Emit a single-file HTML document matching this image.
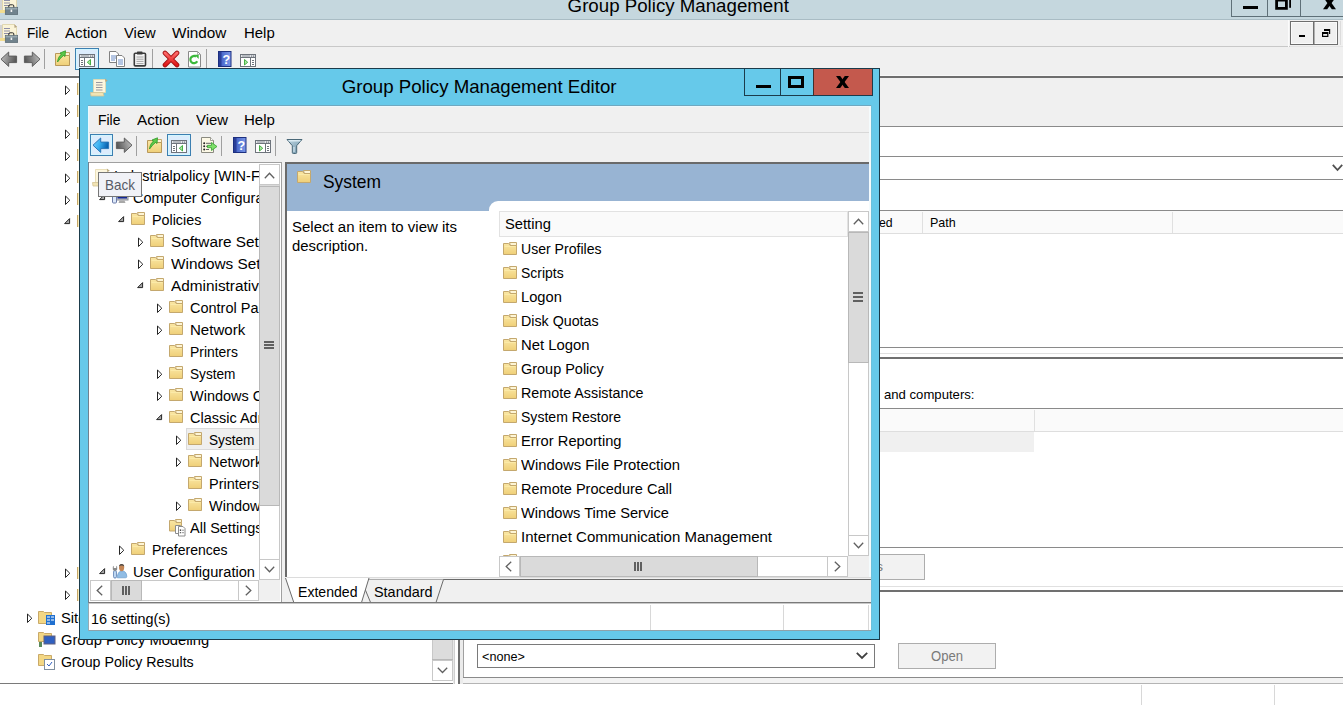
<!DOCTYPE html><html><head><meta charset="utf-8"><style>
html,body{margin:0;padding:0;}
body{width:1343px;height:705px;position:relative;overflow:hidden;background:#fff;font-family:"Liberation Sans", sans-serif;}
.t{position:absolute;white-space:nowrap;line-height:1;}
svg{display:block;}
</style></head><body>
<svg width="0" height="0" style="position:absolute"><defs><linearGradient id="fg" x1="0" y1="0" x2="0" y2="1"><stop offset="0" stop-color="#fae7a4"/><stop offset="1" stop-color="#efcf78"/></linearGradient><linearGradient id="rx" x1="0" y1="0" x2="0" y2="1"><stop offset="0" stop-color="#ff6a6a"/><stop offset="1" stop-color="#e01818"/></linearGradient><linearGradient id="scr" x1="0" y1="0" x2="0" y2="1"><stop offset="0" stop-color="#5a78d8"/><stop offset="1" stop-color="#081a8a"/></linearGradient><linearGradient id="hb" x1="0" y1="0" x2="1" y2="0"><stop offset="0" stop-color="#3a58c0"/><stop offset="1" stop-color="#7a98e8"/></linearGradient><linearGradient id="fl" x1="0" y1="0" x2="1" y2="1"><stop offset="0" stop-color="#c0d8e4"/><stop offset="1" stop-color="#6a8fa4"/></linearGradient><linearGradient id="abl" x1="0" y1="0" x2="1" y2="0.3"><stop offset="0" stop-color="#7ad6ff"/><stop offset="0.5" stop-color="#3ab0f0"/><stop offset="1" stop-color="#0a62b0"/></linearGradient><linearGradient id="agl" x1="0" y1="0" x2="1" y2="0.3"><stop offset="0" stop-color="#c8c8c8"/><stop offset="1" stop-color="#5a5a5a"/></linearGradient><linearGradient id="agr" x1="1" y1="0" x2="0" y2="0.3"><stop offset="0" stop-color="#c8c8c8"/><stop offset="1" stop-color="#5a5a5a"/></linearGradient></defs></svg>
<div style="position:absolute;left:0px;top:0px;width:1343px;height:19px;background:#c5d7de"></div>
<div style="position:absolute;left:0px;top:19px;width:1343px;height:1px;background:#a9bcc4"></div>
<div class="t" style="left:567.60px;top:-3.33px;font-size:18.7px;color:#000;">Group Policy Management</div>
<svg style="position:absolute;left:0px;top:-4px;" width="18" height="19" viewBox="0 0 18 19"><rect x="0" y="1" width="3" height="13" fill="#d4d4d4"/><path d="M2.5 0.5h12l2 2v12.5h-14z" fill="#fbf4d8" stroke="#dcd0a4" stroke-width="0.8"/><path d="M14.2 0.3l2.8 2.4-2.4 1.2z" fill="#b4a484"/><path d="M4 4.5h6M4 7h6M4 9.5h6" stroke="#8f8fa8" stroke-width="1.2"/><rect x="0" y="14" width="6" height="3" fill="#f2dd90"/><rect x="5.3" y="11.3" width="12.4" height="7.2" fill="#71838d" stroke="#55656e" stroke-width="0.7"/><rect x="5.7" y="11.7" width="11.6" height="1.8" fill="#98a8b0"/><path d="M8.8 11.3v-1.3q0-1.2 1.2-1.2h2.6q1.2 0 1.2 1.2v1.3" stroke="#2a2a2a" fill="none" stroke-width="1"/><rect x="10.6" y="13.6" width="1.6" height="2.4" fill="#f4f4f4"/></svg>
<div style="position:absolute;left:1231px;top:0px;width:112px;height:17px;box-sizing:border-box;border-left:1px solid #5f7078;border-bottom:1px solid #5f7078;"></div>
<div style="position:absolute;left:1267px;top:0px;width:1px;height:17px;background:#5f7078"></div>
<div style="position:absolute;left:1300px;top:0px;width:1px;height:17px;background:#5f7078"></div>
<div style="position:absolute;left:1243px;top:6px;width:15px;height:3px;background:#000"></div>
<svg style="position:absolute;left:1274px;top:0px;" width="18" height="11" viewBox="0 0 18 11"><path d="M1.2 -2H13.8V9.8H1.2zM4 1.5H11V7H4z" fill="#000" fill-rule="evenodd"/><rect x="15.2" y="0" width="1.8" height="7.8" fill="#000"/></svg>
<svg style="position:absolute;left:1322px;top:0px;" width="16" height="10" viewBox="0 0 16 10"><path d="M1 -3H5.2L14 9.2H9.8z" fill="#000"/><path d="M9.8 -3H14L5.2 9.2H1z" fill="#000"/></svg>
<div style="position:absolute;left:0px;top:20px;width:1343px;height:26px;background:#f0f0f0"></div>
<div style="position:absolute;left:0px;top:46px;width:1290px;height:1px;background:#c8c8c8"></div>
<svg style="position:absolute;left:0px;top:24px;" width="18" height="19" viewBox="0 0 18 19"><rect x="0" y="1" width="3" height="13" fill="#d4d4d4"/><path d="M2.5 0.5h12l2 2v12.5h-14z" fill="#fbf4d8" stroke="#dcd0a4" stroke-width="0.8"/><path d="M14.2 0.3l2.8 2.4-2.4 1.2z" fill="#b4a484"/><path d="M4 4.5h6M4 7h6M4 9.5h6" stroke="#8f8fa8" stroke-width="1.2"/><rect x="0" y="14" width="6" height="3" fill="#f2dd90"/><rect x="5.3" y="11.3" width="12.4" height="7.2" fill="#71838d" stroke="#55656e" stroke-width="0.7"/><rect x="5.7" y="11.7" width="11.6" height="1.8" fill="#98a8b0"/><path d="M8.8 11.3v-1.3q0-1.2 1.2-1.2h2.6q1.2 0 1.2 1.2v1.3" stroke="#2a2a2a" fill="none" stroke-width="1"/><rect x="10.6" y="13.6" width="1.6" height="2.4" fill="#f4f4f4"/></svg>
<div class="t" style="left:26.60px;top:25.38px;font-size:15.5px;color:#000;transform:scaleX(0.8816);transform-origin:0 0;">File</div>
<div class="t" style="left:65.40px;top:25.38px;font-size:15.5px;color:#000;transform:scaleX(0.9793);transform-origin:0 0;">Action</div>
<div class="t" style="left:124.20px;top:25.38px;font-size:15.5px;color:#000;transform:scaleX(0.9542);transform-origin:0 0;">View</div>
<div class="t" style="left:172.40px;top:25.38px;font-size:15.5px;color:#000;transform:scaleX(0.9859);transform-origin:0 0;">Window</div>
<div class="t" style="left:243.60px;top:25.38px;font-size:15.5px;color:#000;transform:scaleX(0.9638);transform-origin:0 0;">Help</div>
<div style="position:absolute;left:1290px;top:21px;width:48px;height:24px;box-sizing:border-box;border:1px solid #6e6e6e;background:#f0f0f0;box-shadow:inset 0 0 0 1px #fafafa"></div>
<div style="position:absolute;left:1313px;top:22px;width:1px;height:22px;background:#6e6e6e"></div>
<div style="position:absolute;left:1314px;top:22px;width:1px;height:22px;background:#b0b0b0"></div>
<div style="position:absolute;left:1299px;top:35px;width:6px;height:2px;background:#000"></div>
<div style="position:absolute;left:1288px;top:20px;width:1px;height:27px;background:#fbfbfb"></div>
<div style="position:absolute;left:1340px;top:21px;width:1px;height:24px;background:#dcdcdc"></div>
<div style="position:absolute;left:1290px;top:46px;width:53px;height:1px;background:#e4e4e4"></div>
<svg style="position:absolute;left:1321px;top:28px;" width="10" height="10" viewBox="0 0 10 10"><rect x="3" y="1" width="6" height="2" fill="#000"/><rect x="8" y="1" width="1.2" height="5" fill="#000"/><rect x="1.6" y="4.6" width="5.2" height="3.8" fill="#f0f0f0" stroke="#000" stroke-width="1.2"/><rect x="1" y="4" width="6" height="2" fill="#000"/></svg>
<div style="position:absolute;left:0px;top:47px;width:1343px;height:29px;background:#f0f0f0"></div>
<div style="position:absolute;left:0px;top:75px;width:1343px;height:1px;background:#f8f8f8"></div>
<div style="position:absolute;left:0px;top:76px;width:1343px;height:2px;background:#6e6e6e"></div>
<svg style="position:absolute;left:0px;top:51px;" width="18" height="17" viewBox="0 0 18 17"><path d="M1 8.2L8.7 1V5.1H16.6V11.6H8.7V15.4z" fill="url(#agl)" stroke="#5e5e5e" stroke-linejoin="round"/></svg>
<svg style="position:absolute;left:23px;top:51px;" width="18" height="17" viewBox="0 0 18 17"><path d="M17 8.2L9.3 1V5.1H1.4V11.6H9.3V15.4z" fill="url(#agr)" stroke="#5e5e5e" stroke-linejoin="round"/></svg>
<div style="position:absolute;left:44px;top:49px;width:1px;height:20px;background:#a0a0a0"></div>
<svg style="position:absolute;left:55px;top:50px;" width="16" height="17" viewBox="0 0 16 17"><path d="M7.5 2.5H14.5V5.5H8.5z" fill="#fdf5d6" stroke="#c4a86e"/><path d="M0.5 3.5H5.5L7 5.5H14.5V15.5H0.5z" fill="url(#fg)" stroke="#b8985a"/><path d="M2.5 12C3 8 4.5 5.5 6.5 4.2L5 3L10.5 0.8L10 6.5L8.5 5.5C6.5 7 4.5 9.5 2.5 12z" fill="#5cc84a" stroke="#2f9a28" stroke-width="0.8" stroke-linejoin="round"/></svg>
<div style="position:absolute;left:75px;top:48px;width:24px;height:22px;box-sizing:border-box;border:1px solid #3c7fb1;background:#dcecfc;box-shadow:inset 0 0 0 1px #d2f6ff"></div>
<svg style="position:absolute;left:78px;top:53px;" width="18" height="15" viewBox="0 0 18 15"><rect x="1.5" y="1.5" width="15" height="12" fill="#fff" stroke="#6e747c"/><rect x="2" y="2" width="14" height="2.5" fill="#e4e6ea"/><path d="M2 4.5h14" stroke="#6e747c"/><path d="M3 3h8" stroke="#8a9098"/><rect x="12" y="2.5" width="1.2" height="1.2" fill="#6e747c"/><rect x="14" y="2.5" width="1.2" height="1.2" fill="#6e747c"/><path d="M6.5 5v8" stroke="#6e747c"/><path d="M3 7.5h2M3 9.5h2M3 11.5h2" stroke="#6e747c"/><path d="M12.5 6.5v5.5l-3.2-2.75z" fill="#a8e8a0" stroke="#38a838" stroke-width="0.9"/></svg>
<svg style="position:absolute;left:108px;top:50px;" width="18" height="18" viewBox="0 0 18 18"><path d="M1.5 1.5h6.5l2.5 2.5v8.5h-9z" fill="#fff" stroke="#808080"/><path d="M3 6h5M3 8h5M3 10h4" stroke="#5a80c0" stroke-width="0.9"/><path d="M8.5 5.5h5.5l2.5 2.5v8.5h-8z" fill="#fff" stroke="#808080"/><path d="M10 10h5M10 12h5M10 14h5" stroke="#5a80c0" stroke-width="0.9"/></svg>
<svg style="position:absolute;left:133px;top:51px;" width="14" height="16" viewBox="0 0 14 16"><rect x="1.3" y="2.3" width="11.2" height="12.6" rx="1" fill="#f4f4f4" stroke="#3c3c3c" stroke-width="1.6"/><rect x="4" y="0.5" width="5.5" height="3" rx="0.6" fill="#3c3c3c"/><path d="M3.5 6h7M3.5 8.2h7M3.5 10.4h7M3.5 12.6h7" stroke="#9a9a9a" stroke-width="0.9"/></svg>
<div style="position:absolute;left:152px;top:49px;width:1px;height:20px;background:#a0a0a0"></div>
<svg style="position:absolute;left:162px;top:50px;" width="18" height="18" viewBox="0 0 18 18"><path d="M3 3L15 15M15 3L3 15" stroke="#a01010" stroke-width="4.6" stroke-linecap="round"/><path d="M3 3L15 15M15 3L3 15" stroke="url(#rx)" stroke-width="3" stroke-linecap="round"/></svg>
<svg style="position:absolute;left:187px;top:50px;" width="15" height="18" viewBox="0 0 15 18"><path d="M1.5 1.5h9l3 3v12.5h-12z" fill="#fff" stroke="#8a8a8a"/><path d="M10.5 1.5v3h3" fill="none" stroke="#a0a0a0" stroke-width="0.8"/><path d="M10.2 11.2a3.6 3.6 0 1 1-1.2-4.6" fill="none" stroke="#3cb83c" stroke-width="2.2"/><path d="M7.5 4.8h4.2v4.2z" fill="#3cb83c"/></svg>
<div style="position:absolute;left:206px;top:49px;width:1px;height:20px;background:#a0a0a0"></div>
<svg style="position:absolute;left:218px;top:51px;" width="14" height="16" viewBox="0 0 14 16"><rect x="0.5" y="0.5" width="12.5" height="15" fill="url(#hb)" stroke="#1c2f80"/><rect x="1" y="1" width="2.5" height="14" fill="#2a3f98"/><text x="8.3" y="12.6" font-family="Liberation Sans" font-size="12.5" font-weight="bold" fill="#fff" text-anchor="middle">?</text></svg>
<svg style="position:absolute;left:239px;top:53px;" width="18" height="15" viewBox="0 0 18 15"><rect x="1.5" y="1.5" width="15" height="12" fill="#fff" stroke="#6e747c"/><rect x="2" y="2" width="14" height="2.5" fill="#e4e6ea"/><path d="M2 4.5h14" stroke="#6e747c"/><path d="M3 3h8" stroke="#8a9098"/><rect x="12" y="2.5" width="1.2" height="1.2" fill="#6e747c"/><rect x="14" y="2.5" width="1.2" height="1.2" fill="#6e747c"/><path d="M11.5 5v8" stroke="#6e747c"/><path d="M13 7.5h2M13 9.5h2M13 11.5h2" stroke="#6e747c"/><path d="M5.5 6.5v5.5l3.2-2.75z" fill="#a8e8a0" stroke="#38a838" stroke-width="0.9"/></svg>
<div style="position:absolute;left:432px;top:77px;width:21px;height:583px;background:#dcdcdc;box-sizing:border-box;border-left:1px solid #c8c8c8;border-right:1px solid #c8c8c8"></div>
<div style="position:absolute;left:432px;top:659px;width:21px;height:1px;background:#b8b8b8"></div>
<div style="position:absolute;left:432px;top:660px;width:21px;height:21px;box-sizing:border-box;border:1px solid #c8c8c8;background:#fff"></div>
<svg style="position:absolute;left:437px;top:667px;" width="11" height="7" viewBox="0 0 11 7"><path d="M0.8 0.8L5.5 5.5L10.2 0.8" fill="none" stroke="#606060" stroke-width="1.3"/></svg>
<div style="position:absolute;left:0px;top:683px;width:454px;height:1px;background:#7a7a7a"></div>
<div style="position:absolute;left:460px;top:678px;width:883px;height:5px;background:#f3f3f3"></div>
<div style="position:absolute;left:460px;top:683px;width:883px;height:1px;background:#b4b4b4"></div>
<div style="position:absolute;left:453px;top:78px;width:1px;height:606px;background:#e8e8e8"></div>
<div style="position:absolute;left:454px;top:78px;width:1px;height:606px;background:#d0d0d0"></div>
<div style="position:absolute;left:455px;top:78px;width:3px;height:606px;background:#fff"></div>
<div style="position:absolute;left:458px;top:78px;width:2px;height:606px;background:#6e6e6e"></div>
<div style="position:absolute;left:460px;top:78px;width:3px;height:606px;background:#ebebeb"></div>
<svg style="position:absolute;left:65px;top:85px;" width="7" height="10" viewBox="0 0 7 10"><path d="M0.5 1v8.5l4.3-4.25z" fill="none" stroke="#262626" stroke-width="1" stroke-linejoin="miter"/></svg>
<svg style="position:absolute;left:65px;top:107px;" width="7" height="10" viewBox="0 0 7 10"><path d="M0.5 1v8.5l4.3-4.25z" fill="none" stroke="#262626" stroke-width="1" stroke-linejoin="miter"/></svg>
<svg style="position:absolute;left:65px;top:129px;" width="7" height="10" viewBox="0 0 7 10"><path d="M0.5 1v8.5l4.3-4.25z" fill="none" stroke="#262626" stroke-width="1" stroke-linejoin="miter"/></svg>
<svg style="position:absolute;left:65px;top:151px;" width="7" height="10" viewBox="0 0 7 10"><path d="M0.5 1v8.5l4.3-4.25z" fill="none" stroke="#262626" stroke-width="1" stroke-linejoin="miter"/></svg>
<svg style="position:absolute;left:65px;top:173px;" width="7" height="10" viewBox="0 0 7 10"><path d="M0.5 1v8.5l4.3-4.25z" fill="none" stroke="#262626" stroke-width="1" stroke-linejoin="miter"/></svg>
<svg style="position:absolute;left:65px;top:195px;" width="7" height="10" viewBox="0 0 7 10"><path d="M0.5 1v8.5l4.3-4.25z" fill="none" stroke="#262626" stroke-width="1" stroke-linejoin="miter"/></svg>
<svg style="position:absolute;left:63.5px;top:217.5px;" width="7" height="7" viewBox="0 0 7 7"><path d="M5.6 0.6v5h-5z" fill="#a8a8a8" stroke="#262626" stroke-width="1" stroke-linejoin="miter"/></svg>
<div style="position:absolute;left:77px;top:83px;width:2px;height:12px;box-sizing:border-box;background:#f8eec0;border-left:1px solid #c9a968"></div>
<div style="position:absolute;left:77px;top:105px;width:2px;height:12px;box-sizing:border-box;background:#f8eec0;border-left:1px solid #c9a968"></div>
<div style="position:absolute;left:77px;top:127px;width:2px;height:12px;box-sizing:border-box;background:#f8eec0;border-left:1px solid #c9a968"></div>
<div style="position:absolute;left:77px;top:149px;width:2px;height:12px;box-sizing:border-box;background:#f8eec0;border-left:1px solid #c9a968"></div>
<div style="position:absolute;left:77px;top:171px;width:2px;height:12px;box-sizing:border-box;background:#f8eec0;border-left:1px solid #c9a968"></div>
<div style="position:absolute;left:77px;top:193px;width:2px;height:12px;box-sizing:border-box;background:#f8eec0;border-left:1px solid #c9a968"></div>
<div style="position:absolute;left:77px;top:215px;width:2px;height:12px;box-sizing:border-box;background:#f8eec0;border-left:1px solid #c9a968"></div>
<div style="position:absolute;left:77px;top:567px;width:2px;height:12px;box-sizing:border-box;background:#f8eec0;border-left:1px solid #c9a968"></div>
<div style="position:absolute;left:77px;top:589px;width:2px;height:12px;box-sizing:border-box;background:#f8eec0;border-left:1px solid #c9a968"></div>
<svg style="position:absolute;left:65px;top:568px;" width="7" height="10" viewBox="0 0 7 10"><path d="M0.5 1v8.5l4.3-4.25z" fill="none" stroke="#262626" stroke-width="1" stroke-linejoin="miter"/></svg>
<svg style="position:absolute;left:65px;top:590px;" width="7" height="10" viewBox="0 0 7 10"><path d="M0.5 1v8.5l4.3-4.25z" fill="none" stroke="#262626" stroke-width="1" stroke-linejoin="miter"/></svg>
<svg style="position:absolute;left:27px;top:613px;" width="7" height="10" viewBox="0 0 7 10"><path d="M0.5 1v8.5l4.3-4.25z" fill="none" stroke="#262626" stroke-width="1" stroke-linejoin="miter"/></svg>
<svg style="position:absolute;left:38px;top:608px;" width="18" height="18" viewBox="0 0 18 18"><path d="M0.5 3.5h5l1 1h7v11h-13z" fill="#f3d784" stroke="#c9a968"/><rect x="8" y="7" width="9" height="10" fill="#2070d0"/><path d="M9 9h3M13 9h3M9 12h3M13 12h3M9 15h3" stroke="#fff"/></svg>
<div class="t" style="left:60.90px;top:609.88px;font-size:15.5px;color:#000;transform:scaleX(0.9500);transform-origin:0 0;">Sites</div>
<svg style="position:absolute;left:38px;top:630px;" width="18" height="18" viewBox="0 0 18 18"><path d="M0.5 2.5h5l1 1h7v8h-13z" fill="#f3d784" stroke="#c9a968"/><rect x="6" y="6" width="11" height="8" fill="#3060c0" stroke="#606080"/><rect x="1" y="12" width="3" height="5" fill="#5a8a5a"/></svg>
<div class="t" style="left:60.90px;top:631.88px;font-size:15.5px;color:#000;transform:scaleX(0.9500);transform-origin:0 0;">Group Policy Modeling</div>
<svg style="position:absolute;left:38px;top:652px;" width="18" height="18" viewBox="0 0 18 18"><path d="M0.5 2.5h5l1 1h7v10h-13z" fill="#f3d784" stroke="#c9a968"/><rect x="6.5" y="7.5" width="10" height="10" fill="#fff" stroke="#8090a0"/><path d="M9 12l2 2 3-4" stroke="#3060c0" fill="none"/></svg>
<div class="t" style="left:60.90px;top:653.88px;font-size:15.5px;color:#000;transform:scaleX(0.9171);transform-origin:0 0;">Group Policy Results</div>
<div style="position:absolute;left:461px;top:78px;width:882px;height:48px;background:#f0f0f0"></div>
<div style="position:absolute;left:461px;top:126px;width:882px;height:1px;background:#8a8a8a"></div>
<div style="position:absolute;left:461px;top:156px;width:882px;height:1px;background:#8a8a8a"></div>
<div style="position:absolute;left:461px;top:179px;width:882px;height:1px;background:#8a8a8a"></div>
<svg style="position:absolute;left:1332px;top:164px;" width="11" height="8" viewBox="0 0 11 8"><path d="M0.8 0.8L5.5 6L10.2 0.8" fill="none" stroke="#505050" stroke-width="1.8"/></svg>
<div style="position:absolute;left:461px;top:210px;width:882px;height:1px;background:#8a8a8a"></div>
<div style="position:absolute;left:461px;top:211px;width:882px;height:22px;background:#fafafa"></div>
<div style="position:absolute;left:461px;top:233px;width:882px;height:1px;background:#dedede"></div>
<div style="position:absolute;left:922px;top:212px;width:1px;height:21px;background:#e0e0e0"></div>
<div style="position:absolute;left:1172px;top:212px;width:1px;height:21px;background:#e0e0e0"></div>
<div class="t" style="left:878.50px;top:216.37px;font-size:13.5px;color:#000;transform:scaleX(0.9076);transform-origin:0 0;">ed</div>
<div class="t" style="left:929.70px;top:216.37px;font-size:13.5px;color:#000;transform:scaleX(0.9264);transform-origin:0 0;">Path</div>
<div style="position:absolute;left:461px;top:347px;width:882px;height:1px;background:#8a8a8a"></div>
<div style="position:absolute;left:461px;top:353px;width:882px;height:1px;background:#e0e0e0"></div>
<div style="position:absolute;left:461px;top:357px;width:882px;height:2px;background:#707070"></div>
<div class="t" style="left:883.70px;top:388.17px;font-size:13.5px;color:#000;transform:scaleX(0.9723);transform-origin:0 0;">and computers:</div>
<div style="position:absolute;left:461px;top:408px;width:882px;height:1px;background:#8a8a8a"></div>
<div style="position:absolute;left:461px;top:409px;width:882px;height:22px;background:#fafafa"></div>
<div style="position:absolute;left:461px;top:431px;width:882px;height:1px;background:#dedede"></div>
<div style="position:absolute;left:1034px;top:410px;width:1px;height:21px;background:#e0e0e0"></div>
<div style="position:absolute;left:461px;top:432px;width:573px;height:20px;background:#f0f0f0"></div>
<div style="position:absolute;left:461px;top:547px;width:882px;height:1px;background:#8a8a8a"></div>
<div style="position:absolute;left:870px;top:554px;width:55px;height:26px;box-sizing:border-box;border:1px solid #adadad;background:#f2f2f2"></div>
<div class="t" style="left:876.30px;top:560.17px;font-size:13.5px;color:#7a7a7a;">s</div>
<div style="position:absolute;left:461px;top:586px;width:882px;height:1px;background:#e0e0e0"></div>
<div style="position:absolute;left:461px;top:590px;width:882px;height:2px;background:#707070"></div>
<div style="position:absolute;left:463px;top:592px;width:1px;height:86px;background:#a0a0a0"></div>
<div style="position:absolute;left:464px;top:592px;width:879px;height:85px;background:#fff"></div>
<div style="position:absolute;left:463px;top:677px;width:880px;height:1px;background:#8a8a8a"></div>
<div style="position:absolute;left:477px;top:644px;width:398px;height:24px;box-sizing:border-box;border:1px solid #7a7a7a;background:#fff"></div>
<div class="t" style="left:481.50px;top:649.57px;font-size:13.5px;color:#000;transform:scaleX(0.9360);transform-origin:0 0;">&lt;none&gt;</div>
<svg style="position:absolute;left:856px;top:652px;" width="12" height="8" viewBox="0 0 12 8"><path d="M0.8 0.8L6 6L11.2 0.8" fill="none" stroke="#404040" stroke-width="1.8"/></svg>
<div style="position:absolute;left:898px;top:643px;width:98px;height:26px;box-sizing:border-box;border:1px solid #adadad;background:#f2f2f2"></div>
<div class="t" style="left:930.50px;top:649.15px;font-size:14px;color:#7a7a7a;transform:scaleX(0.9349);transform-origin:0 0;">Open</div>
<div style="position:absolute;left:1141px;top:685px;width:1px;height:20px;background:#d8d8d8"></div>
<div style="position:absolute;left:1274px;top:685px;width:1px;height:20px;background:#d8d8d8"></div>
<div style="position:absolute;left:79px;top:68px;width:801px;height:572px;box-sizing:border-box;border:1px solid #1b3b4b;background:#66c9ea"></div>
<div style="position:absolute;left:88px;top:106px;width:783px;height:525px;background:#f0f0f0"></div>
<div style="position:absolute;left:88px;top:105px;width:784px;height:1px;background:#70a8c0"></div>
<div style="position:absolute;left:89px;top:106px;width:782px;height:1px;background:#eef8fc"></div>
<div style="position:absolute;left:88px;top:106px;width:1px;height:56px;background:#eafaff"></div>
<div style="position:absolute;left:88px;top:162px;width:1px;height:441px;background:#6f8290"></div>
<div style="position:absolute;left:88px;top:603px;width:1px;height:28px;background:#98aab2"></div>
<div style="position:absolute;left:871px;top:105px;width:1px;height:526px;background:#6cc0dc"></div>
<svg style="position:absolute;left:89px;top:77px;" width="20" height="20" viewBox="0 0 20 20"><path d="M4.5 2.5h12v13h-12z" fill="#fcf6de" stroke="#e6d9ac" stroke-width="0.8"/><path d="M15.8 1.6l3 2.2-2.3 1.3z" fill="#b8a880"/><path d="M7 5.5h6.5M7 8h6.5M7 10.5h6.5M7 13h6.5" stroke="#9a98a0" stroke-width="1.2"/><path d="M1.5 15.5h12.5l1 3.5h-13z" fill="#f2e4b4" stroke="#d4c494" stroke-width="0.8"/></svg>
<div class="t" style="left:341.70px;top:78.00px;font-size:18.67px;color:#000;">Group Policy Management Editor</div>
<div style="position:absolute;left:744px;top:68px;width:129px;height:28px;box-sizing:border-box;border:1px solid #1b3b4b;"></div>
<div style="position:absolute;left:780px;top:68px;width:1px;height:28px;background:#1b3b4b"></div>
<div style="position:absolute;left:813px;top:69px;width:59px;height:26px;background:#c4594d"></div>
<div style="position:absolute;left:813px;top:68px;width:1px;height:28px;background:#40302e"></div>
<div style="position:absolute;left:756px;top:85px;width:15px;height:3px;background:#000"></div>
<div style="position:absolute;left:788px;top:76px;width:16px;height:12px;box-sizing:border-box;border:3px solid #000"></div>
<svg style="position:absolute;left:835px;top:75px;" width="15" height="14" viewBox="0 0 15 14"><path d="M1 1H5.2L14 13H9.8z" fill="#000"/><path d="M9.8 1H14L5.2 13H1z" fill="#000"/></svg>
<div class="t" style="left:98.10px;top:111.68px;font-size:15.5px;color:#000;transform:scaleX(0.8976);transform-origin:0 0;">File</div>
<div class="t" style="left:137.10px;top:111.68px;font-size:15.5px;color:#000;transform:scaleX(0.9863);transform-origin:0 0;">Action</div>
<div class="t" style="left:196.00px;top:111.68px;font-size:15.5px;color:#000;transform:scaleX(0.9602);transform-origin:0 0;">View</div>
<div class="t" style="left:244.40px;top:111.68px;font-size:15.5px;color:#000;transform:scaleX(0.9701);transform-origin:0 0;">Help</div>
<div style="position:absolute;left:89px;top:132px;width:782px;height:1px;background:#d8d8d8"></div>
<div style="position:absolute;left:90px;top:134px;width:23px;height:22px;box-sizing:border-box;border:1px solid #3c7fb1;background:#dcecfc;box-shadow:inset 0 0 0 1px #d2f6ff"></div>
<svg style="position:absolute;left:92px;top:137px;" width="18" height="17" viewBox="0 0 18 17"><path d="M1 8.2L8.7 1V5.1H16.6V11.6H8.7V15.4z" fill="url(#abl)" stroke="#2a78b8" stroke-linejoin="round"/></svg>
<svg style="position:absolute;left:115px;top:137px;" width="18" height="17" viewBox="0 0 18 17"><path d="M17 8.2L9.3 1V5.1H1.4V11.6H9.3V15.4z" fill="url(#agr)" stroke="#5e5e5e" stroke-linejoin="round"/></svg>
<div style="position:absolute;left:136px;top:136px;width:1px;height:20px;background:#a0a0a0"></div>
<svg style="position:absolute;left:147px;top:137px;" width="16" height="17" viewBox="0 0 16 17"><path d="M7.5 2.5H14.5V5.5H8.5z" fill="#fdf5d6" stroke="#c4a86e"/><path d="M0.5 3.5H5.5L7 5.5H14.5V15.5H0.5z" fill="url(#fg)" stroke="#b8985a"/><path d="M2.5 12C3 8 4.5 5.5 6.5 4.2L5 3L10.5 0.8L10 6.5L8.5 5.5C6.5 7 4.5 9.5 2.5 12z" fill="#5cc84a" stroke="#2f9a28" stroke-width="0.8" stroke-linejoin="round"/></svg>
<div style="position:absolute;left:167px;top:134px;width:24px;height:22px;box-sizing:border-box;border:1px solid #3c7fb1;background:#dcecfc;box-shadow:inset 0 0 0 1px #d2f6ff"></div>
<svg style="position:absolute;left:170px;top:139px;" width="18" height="15" viewBox="0 0 18 15"><rect x="1.5" y="1.5" width="15" height="12" fill="#fff" stroke="#6e747c"/><rect x="2" y="2" width="14" height="2.5" fill="#e4e6ea"/><path d="M2 4.5h14" stroke="#6e747c"/><path d="M3 3h8" stroke="#8a9098"/><rect x="12" y="2.5" width="1.2" height="1.2" fill="#6e747c"/><rect x="14" y="2.5" width="1.2" height="1.2" fill="#6e747c"/><path d="M6.5 5v8" stroke="#6e747c"/><path d="M3 7.5h2M3 9.5h2M3 11.5h2" stroke="#6e747c"/><path d="M12.5 6.5v5.5l-3.2-2.75z" fill="#a8e8a0" stroke="#38a838" stroke-width="0.9"/></svg>
<svg style="position:absolute;left:200px;top:136px;" width="18" height="18" viewBox="0 0 18 18"><path d="M1.5 1.5h9l3 3v12h-12z" fill="#fcf8e6" stroke="#8a8a80"/><path d="M10.5 1.5v3h3" fill="#fff" stroke="#8a8a80" stroke-width="0.8"/><circle cx="4.2" cy="7.3" r="1" fill="#222"/><circle cx="4.2" cy="10.3" r="1" fill="#222"/><circle cx="4.2" cy="13.5" r="1" fill="#222"/><path d="M6 7.3h5M6 10.3h3M6 13.5h3" stroke="#555" stroke-width="0.9"/><path d="M7.5 9.3h4v-2.8l5.5 4-5.5 4v-2.8h-4z" fill="#7ee06a" stroke="#34a030" stroke-width="0.8" stroke-linejoin="round"/></svg>
<div style="position:absolute;left:221px;top:136px;width:1px;height:20px;background:#a0a0a0"></div>
<svg style="position:absolute;left:233px;top:137px;" width="14" height="16" viewBox="0 0 14 16"><rect x="0.5" y="0.5" width="12.5" height="15" fill="url(#hb)" stroke="#1c2f80"/><rect x="1" y="1" width="2.5" height="14" fill="#2a3f98"/><text x="8.3" y="12.6" font-family="Liberation Sans" font-size="12.5" font-weight="bold" fill="#fff" text-anchor="middle">?</text></svg>
<svg style="position:absolute;left:254px;top:139px;" width="18" height="15" viewBox="0 0 18 15"><rect x="1.5" y="1.5" width="15" height="12" fill="#fff" stroke="#6e747c"/><rect x="2" y="2" width="14" height="2.5" fill="#e4e6ea"/><path d="M2 4.5h14" stroke="#6e747c"/><path d="M3 3h8" stroke="#8a9098"/><rect x="12" y="2.5" width="1.2" height="1.2" fill="#6e747c"/><rect x="14" y="2.5" width="1.2" height="1.2" fill="#6e747c"/><path d="M11.5 5v8" stroke="#6e747c"/><path d="M13 7.5h2M13 9.5h2M13 11.5h2" stroke="#6e747c"/><path d="M5.5 6.5v5.5l3.2-2.75z" fill="#a8e8a0" stroke="#38a838" stroke-width="0.9"/></svg>
<div style="position:absolute;left:275px;top:136px;width:1px;height:20px;background:#a0a0a0"></div>
<svg style="position:absolute;left:286px;top:138px;" width="17" height="16" viewBox="0 0 17 16"><path d="M1 1.5h15l-5.3 6.2v6.8q0 1-1 1h-2.4q-1 0-1-1v-6.8z" fill="url(#fl)" stroke="#4a6878" stroke-linejoin="round"/><path d="M2.5 2.8h12" stroke="#e8f4fa" stroke-width="1.2"/><path d="M8 9v5" stroke="#e0f0f8" stroke-width="1"/></svg>
<div style="position:absolute;left:89px;top:162px;width:193px;height:441px;box-sizing:border-box;border:1px solid #a0a0a0;border-left:none;background:#fff"></div>
<div style="position:absolute;left:89px;top:163px;width:170px;height:417px;overflow:hidden">
<div style="position:absolute;left:97px;top:265px;width:80px;height:22px;background:#efefef;box-sizing:border-box;border:1px solid #dadada"></div>
<svg style="position:absolute;left:2px;top:4px;" width="20" height="20" viewBox="0 0 20 20"><path d="M4.5 2.5h12v13h-12z" fill="#fcf6de" stroke="#e6d9ac" stroke-width="0.8"/><path d="M15.8 1.6l3 2.2-2.3 1.3z" fill="#b8a880"/><path d="M7 5.5h6.5M7 8h6.5M7 10.5h6.5M7 13h6.5" stroke="#9a98a0" stroke-width="1.2"/><path d="M1.5 15.5h12.5l1 3.5h-13z" fill="#f2e4b4" stroke="#d4c494" stroke-width="0.8"/></svg>
<div class="t" style="left:25.30px;top:4.68px;font-size:15.5px;color:#000;transform:scaleX(0.9350);transform-origin:0 0;">Industrialpolicy [WIN-F7K1C2GFQJ7]</div>
<svg style="position:absolute;left:9.5px;top:30.69999999999999px;" width="7" height="7" viewBox="0 0 7 7"><path d="M5.6 0.6v5h-5z" fill="#a8a8a8" stroke="#262626" stroke-width="1" stroke-linejoin="miter"/></svg>
<svg style="position:absolute;left:23px;top:26px;" width="17" height="16" viewBox="0 0 17 16"><rect x="4.5" y="0.5" width="11.5" height="10.5" fill="#c4c6cc" stroke="#8a8c94"/><rect x="5.5" y="1.5" width="9.5" height="8" fill="url(#scr)"/><path d="M7.5 11.5h5l1 2.5h-7z" fill="#a8a8a8"/><rect x="0.5" y="3.5" width="4" height="10.5" rx="1" fill="#dce8f8" stroke="#6a7aa8"/></svg>
<div class="t" style="left:44.30px;top:26.68px;font-size:15.5px;color:#000;transform:scaleX(0.9350);transform-origin:0 0;">Computer Configuration</div>
<svg style="position:absolute;left:28.5px;top:52.69999999999999px;" width="7" height="7" viewBox="0 0 7 7"><path d="M5.6 0.6v5h-5z" fill="#a8a8a8" stroke="#262626" stroke-width="1" stroke-linejoin="miter"/></svg>
<svg style="position:absolute;left:42px;top:49px;" width="14" height="13" viewBox="0 0 14 13"><path d="M6.5 0.5H13.5V4H7.5z" fill="#fdf5d6" stroke="#c4a86e"/><path d="M0.5 1.5H5.6L7.2 3.5H13.5V12.5H0.5z" fill="url(#fg)" stroke="#c4a86e"/><path d="M1.5 4.5H12.5" stroke="#fbeaa8" stroke-width="1"/></svg>
<div class="t" style="left:63.30px;top:48.68px;font-size:15.5px;color:#000;transform:scaleX(0.9233);transform-origin:0 0;">Policies</div>
<svg style="position:absolute;left:49px;top:74px;" width="7" height="10" viewBox="0 0 7 10"><path d="M0.5 1v8.5l4.3-4.25z" fill="none" stroke="#262626" stroke-width="1" stroke-linejoin="miter"/></svg>
<svg style="position:absolute;left:61px;top:71px;" width="14" height="13" viewBox="0 0 14 13"><path d="M6.5 0.5H13.5V4H7.5z" fill="#fdf5d6" stroke="#c4a86e"/><path d="M0.5 1.5H5.6L7.2 3.5H13.5V12.5H0.5z" fill="url(#fg)" stroke="#c4a86e"/><path d="M1.5 4.5H12.5" stroke="#fbeaa8" stroke-width="1"/></svg>
<div class="t" style="left:82.30px;top:70.68px;font-size:15.5px;color:#000;transform:scaleX(0.9900);transform-origin:0 0;">Software Settings</div>
<svg style="position:absolute;left:49px;top:96px;" width="7" height="10" viewBox="0 0 7 10"><path d="M0.5 1v8.5l4.3-4.25z" fill="none" stroke="#262626" stroke-width="1" stroke-linejoin="miter"/></svg>
<svg style="position:absolute;left:61px;top:93px;" width="14" height="13" viewBox="0 0 14 13"><path d="M6.5 0.5H13.5V4H7.5z" fill="#fdf5d6" stroke="#c4a86e"/><path d="M0.5 1.5H5.6L7.2 3.5H13.5V12.5H0.5z" fill="url(#fg)" stroke="#c4a86e"/><path d="M1.5 4.5H12.5" stroke="#fbeaa8" stroke-width="1"/></svg>
<div class="t" style="left:82.30px;top:92.68px;font-size:15.5px;color:#000;transform:scaleX(0.9900);transform-origin:0 0;">Windows Settings</div>
<svg style="position:absolute;left:47.5px;top:118.69999999999999px;" width="7" height="7" viewBox="0 0 7 7"><path d="M5.6 0.6v5h-5z" fill="#a8a8a8" stroke="#262626" stroke-width="1" stroke-linejoin="miter"/></svg>
<svg style="position:absolute;left:61px;top:115px;" width="14" height="13" viewBox="0 0 14 13"><path d="M6.5 0.5H13.5V4H7.5z" fill="#fdf5d6" stroke="#c4a86e"/><path d="M0.5 1.5H5.6L7.2 3.5H13.5V12.5H0.5z" fill="url(#fg)" stroke="#c4a86e"/><path d="M1.5 4.5H12.5" stroke="#fbeaa8" stroke-width="1"/></svg>
<div class="t" style="left:82.30px;top:114.68px;font-size:15.5px;color:#000;transform:scaleX(0.9900);transform-origin:0 0;">Administrative Templates</div>
<svg style="position:absolute;left:68px;top:140px;" width="7" height="10" viewBox="0 0 7 10"><path d="M0.5 1v8.5l4.3-4.25z" fill="none" stroke="#262626" stroke-width="1" stroke-linejoin="miter"/></svg>
<svg style="position:absolute;left:80px;top:137px;" width="14" height="13" viewBox="0 0 14 13"><path d="M6.5 0.5H13.5V4H7.5z" fill="#fdf5d6" stroke="#c4a86e"/><path d="M0.5 1.5H5.6L7.2 3.5H13.5V12.5H0.5z" fill="url(#fg)" stroke="#c4a86e"/><path d="M1.5 4.5H12.5" stroke="#fbeaa8" stroke-width="1"/></svg>
<div class="t" style="left:101.30px;top:136.68px;font-size:15.5px;color:#000;transform:scaleX(0.9350);transform-origin:0 0;">Control Panel</div>
<svg style="position:absolute;left:68px;top:162px;" width="7" height="10" viewBox="0 0 7 10"><path d="M0.5 1v8.5l4.3-4.25z" fill="none" stroke="#262626" stroke-width="1" stroke-linejoin="miter"/></svg>
<svg style="position:absolute;left:80px;top:159px;" width="14" height="13" viewBox="0 0 14 13"><path d="M6.5 0.5H13.5V4H7.5z" fill="#fdf5d6" stroke="#c4a86e"/><path d="M0.5 1.5H5.6L7.2 3.5H13.5V12.5H0.5z" fill="url(#fg)" stroke="#c4a86e"/><path d="M1.5 4.5H12.5" stroke="#fbeaa8" stroke-width="1"/></svg>
<div class="t" style="left:101.30px;top:158.68px;font-size:15.5px;color:#000;transform:scaleX(0.9708);transform-origin:0 0;">Network</div>
<svg style="position:absolute;left:80px;top:181px;" width="14" height="13" viewBox="0 0 14 13"><path d="M6.5 0.5H13.5V4H7.5z" fill="#fdf5d6" stroke="#c4a86e"/><path d="M0.5 1.5H5.6L7.2 3.5H13.5V12.5H0.5z" fill="url(#fg)" stroke="#c4a86e"/><path d="M1.5 4.5H12.5" stroke="#fbeaa8" stroke-width="1"/></svg>
<div class="t" style="left:101.30px;top:180.68px;font-size:15.5px;color:#000;transform:scaleX(0.8970);transform-origin:0 0;">Printers</div>
<svg style="position:absolute;left:68px;top:206px;" width="7" height="10" viewBox="0 0 7 10"><path d="M0.5 1v8.5l4.3-4.25z" fill="none" stroke="#262626" stroke-width="1" stroke-linejoin="miter"/></svg>
<svg style="position:absolute;left:80px;top:203px;" width="14" height="13" viewBox="0 0 14 13"><path d="M6.5 0.5H13.5V4H7.5z" fill="#fdf5d6" stroke="#c4a86e"/><path d="M0.5 1.5H5.6L7.2 3.5H13.5V12.5H0.5z" fill="url(#fg)" stroke="#c4a86e"/><path d="M1.5 4.5H12.5" stroke="#fbeaa8" stroke-width="1"/></svg>
<div class="t" style="left:101.30px;top:202.68px;font-size:15.5px;color:#000;transform:scaleX(0.8802);transform-origin:0 0;">System</div>
<svg style="position:absolute;left:68px;top:228px;" width="7" height="10" viewBox="0 0 7 10"><path d="M0.5 1v8.5l4.3-4.25z" fill="none" stroke="#262626" stroke-width="1" stroke-linejoin="miter"/></svg>
<svg style="position:absolute;left:80px;top:225px;" width="14" height="13" viewBox="0 0 14 13"><path d="M6.5 0.5H13.5V4H7.5z" fill="#fdf5d6" stroke="#c4a86e"/><path d="M0.5 1.5H5.6L7.2 3.5H13.5V12.5H0.5z" fill="url(#fg)" stroke="#c4a86e"/><path d="M1.5 4.5H12.5" stroke="#fbeaa8" stroke-width="1"/></svg>
<div class="t" style="left:101.30px;top:224.68px;font-size:15.5px;color:#000;transform:scaleX(0.9350);transform-origin:0 0;">Windows Components</div>
<svg style="position:absolute;left:66.5px;top:250.7px;" width="7" height="7" viewBox="0 0 7 7"><path d="M5.6 0.6v5h-5z" fill="#a8a8a8" stroke="#262626" stroke-width="1" stroke-linejoin="miter"/></svg>
<svg style="position:absolute;left:80px;top:247px;" width="14" height="13" viewBox="0 0 14 13"><path d="M6.5 0.5H13.5V4H7.5z" fill="#fdf5d6" stroke="#c4a86e"/><path d="M0.5 1.5H5.6L7.2 3.5H13.5V12.5H0.5z" fill="url(#fg)" stroke="#c4a86e"/><path d="M1.5 4.5H12.5" stroke="#fbeaa8" stroke-width="1"/></svg>
<div class="t" style="left:101.30px;top:246.68px;font-size:15.5px;color:#000;transform:scaleX(0.9350);transform-origin:0 0;">Classic Administrative Templates</div>
<svg style="position:absolute;left:87px;top:272px;" width="7" height="10" viewBox="0 0 7 10"><path d="M0.5 1v8.5l4.3-4.25z" fill="none" stroke="#262626" stroke-width="1" stroke-linejoin="miter"/></svg>
<svg style="position:absolute;left:99px;top:269px;" width="14" height="13" viewBox="0 0 14 13"><path d="M6.5 0.5H13.5V4H7.5z" fill="#fdf5d6" stroke="#c4a86e"/><path d="M0.5 1.5H5.6L7.2 3.5H13.5V12.5H0.5z" fill="url(#fg)" stroke="#c4a86e"/><path d="M1.5 4.5H12.5" stroke="#fbeaa8" stroke-width="1"/></svg>
<div class="t" style="left:120.30px;top:268.68px;font-size:15.5px;color:#000;transform:scaleX(0.8802);transform-origin:0 0;">System</div>
<svg style="position:absolute;left:87px;top:294px;" width="7" height="10" viewBox="0 0 7 10"><path d="M0.5 1v8.5l4.3-4.25z" fill="none" stroke="#262626" stroke-width="1" stroke-linejoin="miter"/></svg>
<svg style="position:absolute;left:99px;top:291px;" width="14" height="13" viewBox="0 0 14 13"><path d="M6.5 0.5H13.5V4H7.5z" fill="#fdf5d6" stroke="#c4a86e"/><path d="M0.5 1.5H5.6L7.2 3.5H13.5V12.5H0.5z" fill="url(#fg)" stroke="#c4a86e"/><path d="M1.5 4.5H12.5" stroke="#fbeaa8" stroke-width="1"/></svg>
<div class="t" style="left:120.30px;top:290.68px;font-size:15.5px;color:#000;transform:scaleX(0.9350);transform-origin:0 0;">Network</div>
<svg style="position:absolute;left:99px;top:313px;" width="14" height="13" viewBox="0 0 14 13"><path d="M6.5 0.5H13.5V4H7.5z" fill="#fdf5d6" stroke="#c4a86e"/><path d="M0.5 1.5H5.6L7.2 3.5H13.5V12.5H0.5z" fill="url(#fg)" stroke="#c4a86e"/><path d="M1.5 4.5H12.5" stroke="#fbeaa8" stroke-width="1"/></svg>
<div class="t" style="left:120.30px;top:312.68px;font-size:15.5px;color:#000;transform:scaleX(0.9350);transform-origin:0 0;">Printers</div>
<svg style="position:absolute;left:87px;top:338px;" width="7" height="10" viewBox="0 0 7 10"><path d="M0.5 1v8.5l4.3-4.25z" fill="none" stroke="#262626" stroke-width="1" stroke-linejoin="miter"/></svg>
<svg style="position:absolute;left:99px;top:335px;" width="14" height="13" viewBox="0 0 14 13"><path d="M6.5 0.5H13.5V4H7.5z" fill="#fdf5d6" stroke="#c4a86e"/><path d="M0.5 1.5H5.6L7.2 3.5H13.5V12.5H0.5z" fill="url(#fg)" stroke="#c4a86e"/><path d="M1.5 4.5H12.5" stroke="#fbeaa8" stroke-width="1"/></svg>
<div class="t" style="left:120.30px;top:334.68px;font-size:15.5px;color:#000;transform:scaleX(0.9350);transform-origin:0 0;">Windows Components</div>
<svg style="position:absolute;left:80px;top:356px;" width="18" height="18" viewBox="0 0 18 18"><path d="M6.5 0.5H12.5V3.5H7.5z" fill="#fdf5d6" stroke="#c4a86e"/><path d="M0.5 1.5H5.5L7 3.5H12.5V12H0.5z" fill="url(#fg)" stroke="#c4a86e"/><path d="M6.5 6.5h5l2 2v6h-7z" fill="#fff" stroke="#8c8c8c"/><path d="M9.5 7.5h4.5l2 2v7.5h-6.5z" fill="#fff" stroke="#8c8c8c"/><rect x="10.8" y="10.5" width="1.3" height="1.3" fill="#222"/><rect x="10.8" y="13" width="1.3" height="1.3" fill="#666"/><path d="M12.8 11.2h2.2M12.8 13.7h2.2" stroke="#888" stroke-width="0.9"/></svg>
<div class="t" style="left:101.30px;top:356.68px;font-size:15.5px;color:#000;transform:scaleX(0.9350);transform-origin:0 0;">All Settings</div>
<svg style="position:absolute;left:30px;top:382px;" width="7" height="10" viewBox="0 0 7 10"><path d="M0.5 1v8.5l4.3-4.25z" fill="none" stroke="#262626" stroke-width="1" stroke-linejoin="miter"/></svg>
<svg style="position:absolute;left:42px;top:379px;" width="14" height="13" viewBox="0 0 14 13"><path d="M6.5 0.5H13.5V4H7.5z" fill="#fdf5d6" stroke="#c4a86e"/><path d="M0.5 1.5H5.6L7.2 3.5H13.5V12.5H0.5z" fill="url(#fg)" stroke="#c4a86e"/><path d="M1.5 4.5H12.5" stroke="#fbeaa8" stroke-width="1"/></svg>
<div class="t" style="left:63.30px;top:378.68px;font-size:15.5px;color:#000;transform:scaleX(0.9037);transform-origin:0 0;">Preferences</div>
<svg style="position:absolute;left:9.5px;top:404.70000000000005px;" width="7" height="7" viewBox="0 0 7 7"><path d="M5.6 0.6v5h-5z" fill="#a8a8a8" stroke="#262626" stroke-width="1" stroke-linejoin="miter"/></svg>
<svg style="position:absolute;left:23px;top:400px;" width="16" height="16" viewBox="0 0 16 16"><path d="M5.3 14.8C5.3 10.2 7.6 7.8 10 7.8C12.6 7.8 14.8 10 14.8 13.5Q14.8 14.8 13.4 14.8z" fill="#90bce4" stroke="#6a9ccc" stroke-width="0.7"/><ellipse cx="9.6" cy="4.6" rx="2.6" ry="3.6" fill="#c48656"/><path d="M7 3.6Q7.1 0.9 9.6 0.9Q12.2 0.9 12.2 3.6Q11 2.3 9.6 2.5Q8.2 2.3 7 3.6z" fill="#4a4a4a"/><rect x="1.6" y="7.5" width="2.8" height="7.6" rx="1.4" fill="#c8e0f8" stroke="#4a70a8" stroke-width="0.8"/><path d="M0.8 6.5V3.8L1.8 2.8V5H4.2V2.8L5.2 3.8V6.5L4.2 7.8H1.8z" fill="#8a8a8a"/></svg>
<div class="t" style="left:44.30px;top:400.68px;font-size:15.5px;color:#000;transform:scaleX(0.9438);transform-origin:0 0;">User Configuration</div>
</div>
<div style="position:absolute;left:259px;top:164px;width:21px;height:416px;background:#dadada;box-sizing:border-box;border-left:1px solid #c8c8c8;border-right:1px solid #c8c8c8"></div>
<div style="position:absolute;left:259px;top:164px;width:21px;height:21px;box-sizing:border-box;border:1px solid #c8c8c8;background:#fff"></div>
<svg style="position:absolute;left:264px;top:172px;" width="11" height="7" viewBox="0 0 11 7"><path d="M0.8 6.2L5.5 1.2L10.2 6.2" fill="none" stroke="#606060" stroke-width="1.3"/></svg>
<div style="position:absolute;left:259px;top:186px;width:21px;height:320px;box-sizing:border-box;border:1px solid #b8b8b8;background:#dadada"></div>
<div style="position:absolute;left:264px;top:341px;width:10px;height:2px;background:#606060"></div>
<div style="position:absolute;left:264px;top:344px;width:10px;height:2px;background:#606060"></div>
<div style="position:absolute;left:264px;top:347px;width:10px;height:2px;background:#606060"></div>
<div style="position:absolute;left:259px;top:506px;width:21px;height:54px;background:#fff;box-sizing:border-box;border-left:1px solid #c8c8c8;border-right:1px solid #c8c8c8"></div>
<div style="position:absolute;left:259px;top:559px;width:21px;height:21px;box-sizing:border-box;border:1px solid #c8c8c8;background:#fff"></div>
<svg style="position:absolute;left:264px;top:566px;" width="11" height="7" viewBox="0 0 11 7"><path d="M0.8 0.8L5.5 5.8L10.2 0.8" fill="none" stroke="#606060" stroke-width="1.3"/></svg>
<div style="position:absolute;left:90px;top:580px;width:169px;height:21px;box-sizing:border-box;border:1px solid #c8c8c8;background:#fff"></div>
<div style="position:absolute;left:90px;top:580px;width:21px;height:21px;box-sizing:border-box;border:1px solid #c8c8c8;background:#fff"></div>
<svg style="position:absolute;left:96px;top:585px;" width="7" height="11" viewBox="0 0 7 11"><path d="M6.2 0.8L1.2 5.5L6.2 10.2" fill="none" stroke="#606060" stroke-width="1.3"/></svg>
<div style="position:absolute;left:111px;top:580px;width:31px;height:21px;box-sizing:border-box;border:1px solid #b8b8b8;background:#dadada"></div>
<div style="position:absolute;left:122px;top:586px;width:2px;height:9px;background:#606060"></div>
<div style="position:absolute;left:125px;top:586px;width:2px;height:9px;background:#606060"></div>
<div style="position:absolute;left:128px;top:586px;width:2px;height:9px;background:#606060"></div>
<div style="position:absolute;left:238px;top:580px;width:21px;height:21px;box-sizing:border-box;border:1px solid #c8c8c8;background:#fff"></div>
<svg style="position:absolute;left:245px;top:585px;" width="7" height="11" viewBox="0 0 7 11"><path d="M0.8 0.8L5.8 5.5L0.8 10.2" fill="none" stroke="#606060" stroke-width="1.3"/></svg>
<div style="position:absolute;left:259px;top:580px;width:21px;height:21px;background:#f0f0f0"></div>
<div style="position:absolute;left:98px;top:172px;width:44px;height:25px;box-sizing:border-box;border:1px solid #767676;background:#f1f2f7"></div>
<div class="t" style="left:105.00px;top:177.10px;font-size:15px;color:#575a66;transform:scaleX(0.8969);transform-origin:0 0;">Back</div>
<div style="position:absolute;left:869px;top:107px;width:2px;height:470px;background:#f4fbfd"></div>
<div style="position:absolute;left:285px;top:162px;width:584px;height:415px;box-sizing:border-box;border-left:2px solid #6a6a6a;border-top:2px solid #6a6a6a;background:#fff"></div>
<div style="position:absolute;left:287px;top:164px;width:582px;height:47px;background:#98b4d3"></div>
<svg style="position:absolute;left:297px;top:170px;" width="14" height="13" viewBox="0 0 14 13"><path d="M6.5 0.5H13.5V4H7.5z" fill="#fdf5d6" stroke="#c4a86e"/><path d="M0.5 1.5H5.6L7.2 3.5H13.5V12.5H0.5z" fill="url(#fg)" stroke="#c4a86e"/><path d="M1.5 4.5H12.5" stroke="#fbeaa8" stroke-width="1"/></svg>
<div class="t" style="left:322.60px;top:173.34px;font-size:18.5px;color:#000;transform:scaleX(0.9401);transform-origin:0 0;">System</div>
<div class="t" style="left:292.20px;top:218.68px;font-size:15.5px;color:#000;transform:scaleX(0.9673);transform-origin:0 0;">Select an item to view its</div>
<div class="t" style="left:292.20px;top:238.18px;font-size:15.5px;color:#000;transform:scaleX(0.9600);transform-origin:0 0;">description.</div>
<div style="position:absolute;left:489px;top:201px;width:380px;height:20px;background:#fff;border-top-left-radius:9px"></div>
<div style="position:absolute;left:499px;top:211px;width:349px;height:26px;box-sizing:border-box;border:1px solid #e2e2e2;background:#fafafa"></div>
<div class="t" style="left:504.80px;top:216.48px;font-size:15.5px;color:#000;transform:scaleX(0.9500);transform-origin:0 0;">Setting</div>
<div style="position:absolute;left:499px;top:237px;width:349px;height:320px;overflow:hidden">
<svg style="position:absolute;left:4px;top:5px;" width="14" height="13" viewBox="0 0 14 13"><path d="M6.5 0.5H13.5V4H7.5z" fill="#fdf5d6" stroke="#c4a86e"/><path d="M0.5 1.5H5.6L7.2 3.5H13.5V12.5H0.5z" fill="url(#fg)" stroke="#c4a86e"/><path d="M1.5 4.5H12.5" stroke="#fbeaa8" stroke-width="1"/></svg>
<div class="t" style="left:22.20px;top:3.78px;font-size:15.5px;color:#000;transform:scaleX(0.9072);transform-origin:0 0;">User Profiles</div>
<svg style="position:absolute;left:4px;top:29px;" width="14" height="13" viewBox="0 0 14 13"><path d="M6.5 0.5H13.5V4H7.5z" fill="#fdf5d6" stroke="#c4a86e"/><path d="M0.5 1.5H5.6L7.2 3.5H13.5V12.5H0.5z" fill="url(#fg)" stroke="#c4a86e"/><path d="M1.5 4.5H12.5" stroke="#fbeaa8" stroke-width="1"/></svg>
<div class="t" style="left:22.20px;top:27.78px;font-size:15.5px;color:#000;transform:scaleX(0.8996);transform-origin:0 0;">Scripts</div>
<svg style="position:absolute;left:4px;top:53px;" width="14" height="13" viewBox="0 0 14 13"><path d="M6.5 0.5H13.5V4H7.5z" fill="#fdf5d6" stroke="#c4a86e"/><path d="M0.5 1.5H5.6L7.2 3.5H13.5V12.5H0.5z" fill="url(#fg)" stroke="#c4a86e"/><path d="M1.5 4.5H12.5" stroke="#fbeaa8" stroke-width="1"/></svg>
<div class="t" style="left:22.20px;top:51.78px;font-size:15.5px;color:#000;transform:scaleX(0.9469);transform-origin:0 0;">Logon</div>
<svg style="position:absolute;left:4px;top:77px;" width="14" height="13" viewBox="0 0 14 13"><path d="M6.5 0.5H13.5V4H7.5z" fill="#fdf5d6" stroke="#c4a86e"/><path d="M0.5 1.5H5.6L7.2 3.5H13.5V12.5H0.5z" fill="url(#fg)" stroke="#c4a86e"/><path d="M1.5 4.5H12.5" stroke="#fbeaa8" stroke-width="1"/></svg>
<div class="t" style="left:22.20px;top:75.78px;font-size:15.5px;color:#000;transform:scaleX(0.9195);transform-origin:0 0;">Disk Quotas</div>
<svg style="position:absolute;left:4px;top:101px;" width="14" height="13" viewBox="0 0 14 13"><path d="M6.5 0.5H13.5V4H7.5z" fill="#fdf5d6" stroke="#c4a86e"/><path d="M0.5 1.5H5.6L7.2 3.5H13.5V12.5H0.5z" fill="url(#fg)" stroke="#c4a86e"/><path d="M1.5 4.5H12.5" stroke="#fbeaa8" stroke-width="1"/></svg>
<div class="t" style="left:22.20px;top:99.78px;font-size:15.5px;color:#000;transform:scaleX(0.9576);transform-origin:0 0;">Net Logon</div>
<svg style="position:absolute;left:4px;top:125px;" width="14" height="13" viewBox="0 0 14 13"><path d="M6.5 0.5H13.5V4H7.5z" fill="#fdf5d6" stroke="#c4a86e"/><path d="M0.5 1.5H5.6L7.2 3.5H13.5V12.5H0.5z" fill="url(#fg)" stroke="#c4a86e"/><path d="M1.5 4.5H12.5" stroke="#fbeaa8" stroke-width="1"/></svg>
<div class="t" style="left:22.20px;top:123.78px;font-size:15.5px;color:#000;transform:scaleX(0.9331);transform-origin:0 0;">Group Policy</div>
<svg style="position:absolute;left:4px;top:149px;" width="14" height="13" viewBox="0 0 14 13"><path d="M6.5 0.5H13.5V4H7.5z" fill="#fdf5d6" stroke="#c4a86e"/><path d="M0.5 1.5H5.6L7.2 3.5H13.5V12.5H0.5z" fill="url(#fg)" stroke="#c4a86e"/><path d="M1.5 4.5H12.5" stroke="#fbeaa8" stroke-width="1"/></svg>
<div class="t" style="left:22.20px;top:147.78px;font-size:15.5px;color:#000;transform:scaleX(0.9233);transform-origin:0 0;">Remote Assistance</div>
<svg style="position:absolute;left:4px;top:173px;" width="14" height="13" viewBox="0 0 14 13"><path d="M6.5 0.5H13.5V4H7.5z" fill="#fdf5d6" stroke="#c4a86e"/><path d="M0.5 1.5H5.6L7.2 3.5H13.5V12.5H0.5z" fill="url(#fg)" stroke="#c4a86e"/><path d="M1.5 4.5H12.5" stroke="#fbeaa8" stroke-width="1"/></svg>
<div class="t" style="left:22.20px;top:171.78px;font-size:15.5px;color:#000;transform:scaleX(0.9068);transform-origin:0 0;">System Restore</div>
<svg style="position:absolute;left:4px;top:197px;" width="14" height="13" viewBox="0 0 14 13"><path d="M6.5 0.5H13.5V4H7.5z" fill="#fdf5d6" stroke="#c4a86e"/><path d="M0.5 1.5H5.6L7.2 3.5H13.5V12.5H0.5z" fill="url(#fg)" stroke="#c4a86e"/><path d="M1.5 4.5H12.5" stroke="#fbeaa8" stroke-width="1"/></svg>
<div class="t" style="left:22.20px;top:195.78px;font-size:15.5px;color:#000;transform:scaleX(0.9486);transform-origin:0 0;">Error Reporting</div>
<svg style="position:absolute;left:4px;top:221px;" width="14" height="13" viewBox="0 0 14 13"><path d="M6.5 0.5H13.5V4H7.5z" fill="#fdf5d6" stroke="#c4a86e"/><path d="M0.5 1.5H5.6L7.2 3.5H13.5V12.5H0.5z" fill="url(#fg)" stroke="#c4a86e"/><path d="M1.5 4.5H12.5" stroke="#fbeaa8" stroke-width="1"/></svg>
<div class="t" style="left:22.20px;top:219.78px;font-size:15.5px;color:#000;transform:scaleX(0.9565);transform-origin:0 0;">Windows File Protection</div>
<svg style="position:absolute;left:4px;top:245px;" width="14" height="13" viewBox="0 0 14 13"><path d="M6.5 0.5H13.5V4H7.5z" fill="#fdf5d6" stroke="#c4a86e"/><path d="M0.5 1.5H5.6L7.2 3.5H13.5V12.5H0.5z" fill="url(#fg)" stroke="#c4a86e"/><path d="M1.5 4.5H12.5" stroke="#fbeaa8" stroke-width="1"/></svg>
<div class="t" style="left:22.20px;top:243.78px;font-size:15.5px;color:#000;transform:scaleX(0.9372);transform-origin:0 0;">Remote Procedure Call</div>
<svg style="position:absolute;left:4px;top:269px;" width="14" height="13" viewBox="0 0 14 13"><path d="M6.5 0.5H13.5V4H7.5z" fill="#fdf5d6" stroke="#c4a86e"/><path d="M0.5 1.5H5.6L7.2 3.5H13.5V12.5H0.5z" fill="url(#fg)" stroke="#c4a86e"/><path d="M1.5 4.5H12.5" stroke="#fbeaa8" stroke-width="1"/></svg>
<div class="t" style="left:22.20px;top:267.78px;font-size:15.5px;color:#000;transform:scaleX(0.9440);transform-origin:0 0;">Windows Time Service</div>
<svg style="position:absolute;left:4px;top:293px;" width="14" height="13" viewBox="0 0 14 13"><path d="M6.5 0.5H13.5V4H7.5z" fill="#fdf5d6" stroke="#c4a86e"/><path d="M0.5 1.5H5.6L7.2 3.5H13.5V12.5H0.5z" fill="url(#fg)" stroke="#c4a86e"/><path d="M1.5 4.5H12.5" stroke="#fbeaa8" stroke-width="1"/></svg>
<div class="t" style="left:22.20px;top:291.78px;font-size:15.5px;color:#000;transform:scaleX(0.9679);transform-origin:0 0;">Internet Communication Management</div>
<svg style="position:absolute;left:4px;top:317px;" width="14" height="13" viewBox="0 0 14 13"><path d="M6.5 0.5H13.5V4H7.5z" fill="#fdf5d6" stroke="#c4a86e"/><path d="M0.5 1.5H5.6L7.2 3.5H13.5V12.5H0.5z" fill="url(#fg)" stroke="#c4a86e"/><path d="M1.5 4.5H12.5" stroke="#fbeaa8" stroke-width="1"/></svg>
<div class="t" style="left:22.20px;top:315.78px;font-size:15.5px;color:#000;transform:scaleX(0.9500);transform-origin:0 0;">Power Management</div>
</div>
<div style="position:absolute;left:848px;top:211px;width:21px;height:346px;box-sizing:border-box;border-left:1px solid #c8c8c8;border-right:1px solid #c8c8c8;background:#fff"></div>
<div style="position:absolute;left:848px;top:211px;width:21px;height:21px;box-sizing:border-box;border:1px solid #c8c8c8;background:#fff"></div>
<svg style="position:absolute;left:853px;top:218px;" width="11" height="7" viewBox="0 0 11 7"><path d="M0.8 6.2L5.5 1.2L10.2 6.2" fill="none" stroke="#606060" stroke-width="1.3"/></svg>
<div style="position:absolute;left:848px;top:232px;width:21px;height:131px;box-sizing:border-box;border:1px solid #b8b8b8;background:#dadada"></div>
<div style="position:absolute;left:853px;top:292px;width:10px;height:2px;background:#606060"></div>
<div style="position:absolute;left:853px;top:296px;width:10px;height:2px;background:#606060"></div>
<div style="position:absolute;left:853px;top:300px;width:10px;height:2px;background:#606060"></div>
<div style="position:absolute;left:848px;top:535px;width:21px;height:21px;box-sizing:border-box;border:1px solid #c8c8c8;background:#fff"></div>
<svg style="position:absolute;left:853px;top:542px;" width="11" height="7" viewBox="0 0 11 7"><path d="M0.8 0.8L5.5 5.8L10.2 0.8" fill="none" stroke="#606060" stroke-width="1.3"/></svg>
<div style="position:absolute;left:499px;top:556px;width:349px;height:21px;box-sizing:border-box;border:1px solid #c8c8c8;background:#fff"></div>
<div style="position:absolute;left:499px;top:556px;width:21px;height:21px;box-sizing:border-box;border:1px solid #c8c8c8;background:#fff"></div>
<svg style="position:absolute;left:505px;top:561px;" width="7" height="11" viewBox="0 0 7 11"><path d="M6.2 0.8L1.2 5.5L6.2 10.2" fill="none" stroke="#606060" stroke-width="1.3"/></svg>
<div style="position:absolute;left:520px;top:556px;width:238px;height:21px;box-sizing:border-box;border:1px solid #b8b8b8;background:#dadada"></div>
<div style="position:absolute;left:634px;top:562px;width:2px;height:9px;background:#606060"></div>
<div style="position:absolute;left:637px;top:562px;width:2px;height:9px;background:#606060"></div>
<div style="position:absolute;left:640px;top:562px;width:2px;height:9px;background:#606060"></div>
<div style="position:absolute;left:827px;top:556px;width:21px;height:21px;box-sizing:border-box;border:1px solid #c8c8c8;background:#fff"></div>
<svg style="position:absolute;left:834px;top:561px;" width="7" height="11" viewBox="0 0 7 11"><path d="M0.8 0.8L5.8 5.5L0.8 10.2" fill="none" stroke="#606060" stroke-width="1.3"/></svg>
<div style="position:absolute;left:848px;top:556px;width:21px;height:21px;background:#f0f0f0"></div>
<div style="position:absolute;left:287px;top:577px;width:584px;height:1px;background:#dcdcdc"></div>
<div style="position:absolute;left:369px;top:579px;width:502px;height:1px;background:#6a6a6a"></div>
<svg style="position:absolute;left:284px;top:577px;" width="170" height="27" viewBox="0 0 170 27"><path d="M77 2.5H159.5L152 25.5H86.6z" fill="#f0f0f0"/><path d="M77 2.5L86.6 25.5M159.5 2.5L152 25.5" fill="none" stroke="#6a6a6a"/><path d="M1.5 1L9.8 25.5H77.5L85 1z" fill="#fff"/><path d="M1.5 1L9.8 25.5M77.5 25.5L85 1" fill="none" stroke="#6a6a6a"/></svg>
<div class="t" style="left:297.60px;top:584.00px;font-size:15px;color:#000;transform:scaleX(0.9389);transform-origin:0 0;">Extended</div>
<div class="t" style="left:373.50px;top:584.00px;font-size:15px;color:#000;transform:scaleX(0.9606);transform-origin:0 0;">Standard</div>
<div style="position:absolute;left:89px;top:602px;width:782px;height:1px;background:#7a7a7a"></div>
<div style="position:absolute;left:89px;top:603px;width:782px;height:1px;background:#c8c8c8"></div>
<div style="position:absolute;left:89px;top:604px;width:782px;height:26px;background:#fff"></div>
<div style="position:absolute;left:650px;top:605px;width:1px;height:25px;background:#d8d8d8"></div>
<div style="position:absolute;left:783px;top:605px;width:1px;height:25px;background:#d8d8d8"></div>
<div style="position:absolute;left:868px;top:605px;width:1px;height:25px;background:#d8d8d8"></div>
<div class="t" style="left:91.00px;top:611.30px;font-size:15px;color:#000;transform:scaleX(0.9616);transform-origin:0 0;">16 setting(s)</div>
<div style="position:absolute;left:89px;top:630px;width:782px;height:1px;background:#8ea2aa"></div>
</body></html>
